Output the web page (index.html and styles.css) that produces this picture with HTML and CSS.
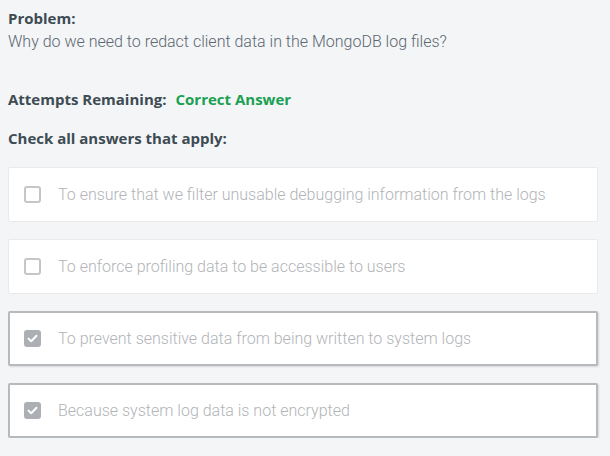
FILE: index.html
```html
<!DOCTYPE html>
<html>
<head>
<meta charset="utf-8">
<link rel="stylesheet" href="styles.css">
</head>
<body>
<div class="page">
  <div class="label">Problem:</div>
  <div class="question">Why do we need to redact client data in the MongoDB log files?</div>
  <div class="attempts"><span class="label">Attempts Remaining:</span><span class="correct">Correct Answer</span></div>
  <div class="label check-label">Check all answers that apply:</div>
  <div class="options">
    <div class="option">
      <span class="box"></span>
      <span class="text">To ensure that we filter unusable debugging information from the logs</span>
    </div>
    <div class="option">
      <span class="box"></span>
      <span class="text">To enforce profiling data to be accessible to users</span>
    </div>
    <div class="option selected">
      <span class="box checked"><svg width="11" height="9" viewBox="0 0 11 9"><path d="M1.5 4.6 L4.2 7.2 L9.5 1.8" fill="none" stroke="#fff" stroke-width="2" stroke-linecap="round" stroke-linejoin="round"/></svg></span>
      <span class="text">To prevent sensitive data from being written to system logs</span>
    </div>
    <div class="option selected">
      <span class="box checked"><svg width="11" height="9" viewBox="0 0 11 9"><path d="M1.5 4.6 L4.2 7.2 L9.5 1.8" fill="none" stroke="#fff" stroke-width="2" stroke-linecap="round" stroke-linejoin="round"/></svg></span>
      <span class="text">Because system log data is not encrypted</span>
    </div>
  </div>
</div>
</body>
</html>
```
FILE: styles.css
```css
html, body {
  margin: 0;
  padding: 0;
  background: #f4f5f7;
}
.page {
  padding: 8px 12px 0 8px;
  font-family: Roboto, "Liberation Sans", sans-serif;
  color: #5b6770;
}
.label {
  font-family: "Open Sans", Roboto, sans-serif;
  font-weight: 700;
  font-size: 15px;
  color: #3d4b53;
  line-height: 20px;
}
.question {
  font-size: 16px;
  font-weight: 300;
  color: #5b6770;
  line-height: 20px;
  margin-top: 4px;
}
.attempts {
  display: flex;
  gap: 9px;
  margin-top: 37px;
  line-height: 20px;
}
.correct {
  font-family: "Open Sans", Roboto, sans-serif;
  font-weight: 700;
  font-size: 15px;
  color: #1aa052;
}
.check-label {
  margin-top: 19px;
}
.options {
  margin-top: 19px;
  display: flex;
  flex-direction: column;
  gap: 17px;
}
.option {
  background: #fff;
  border: 1px solid #e8eaec;
  height: 53px;
  display: flex;
  align-items: center;
  padding-left: 15px;
  gap: 17px;
  border-radius: 2px;
}
.option.selected {
  border: 2px solid #b6babd;
  height: 51px;
  padding-left: 14px;
  box-shadow: 1px 1px 2px rgba(0,0,0,0.12);
}
.box {
  width: 13px;
  height: 13px;
  border: 2px solid #c4c7ca;
  border-radius: 3px;
  flex: none;
  display: flex;
  align-items: center;
  justify-content: center;
}
.box.checked {
  background: #acb0b4;
  border-color: #acb0b4;
}
.text {
  font-size: 16px;
  font-weight: 300;
  color: #b1b4b7;
}
```
